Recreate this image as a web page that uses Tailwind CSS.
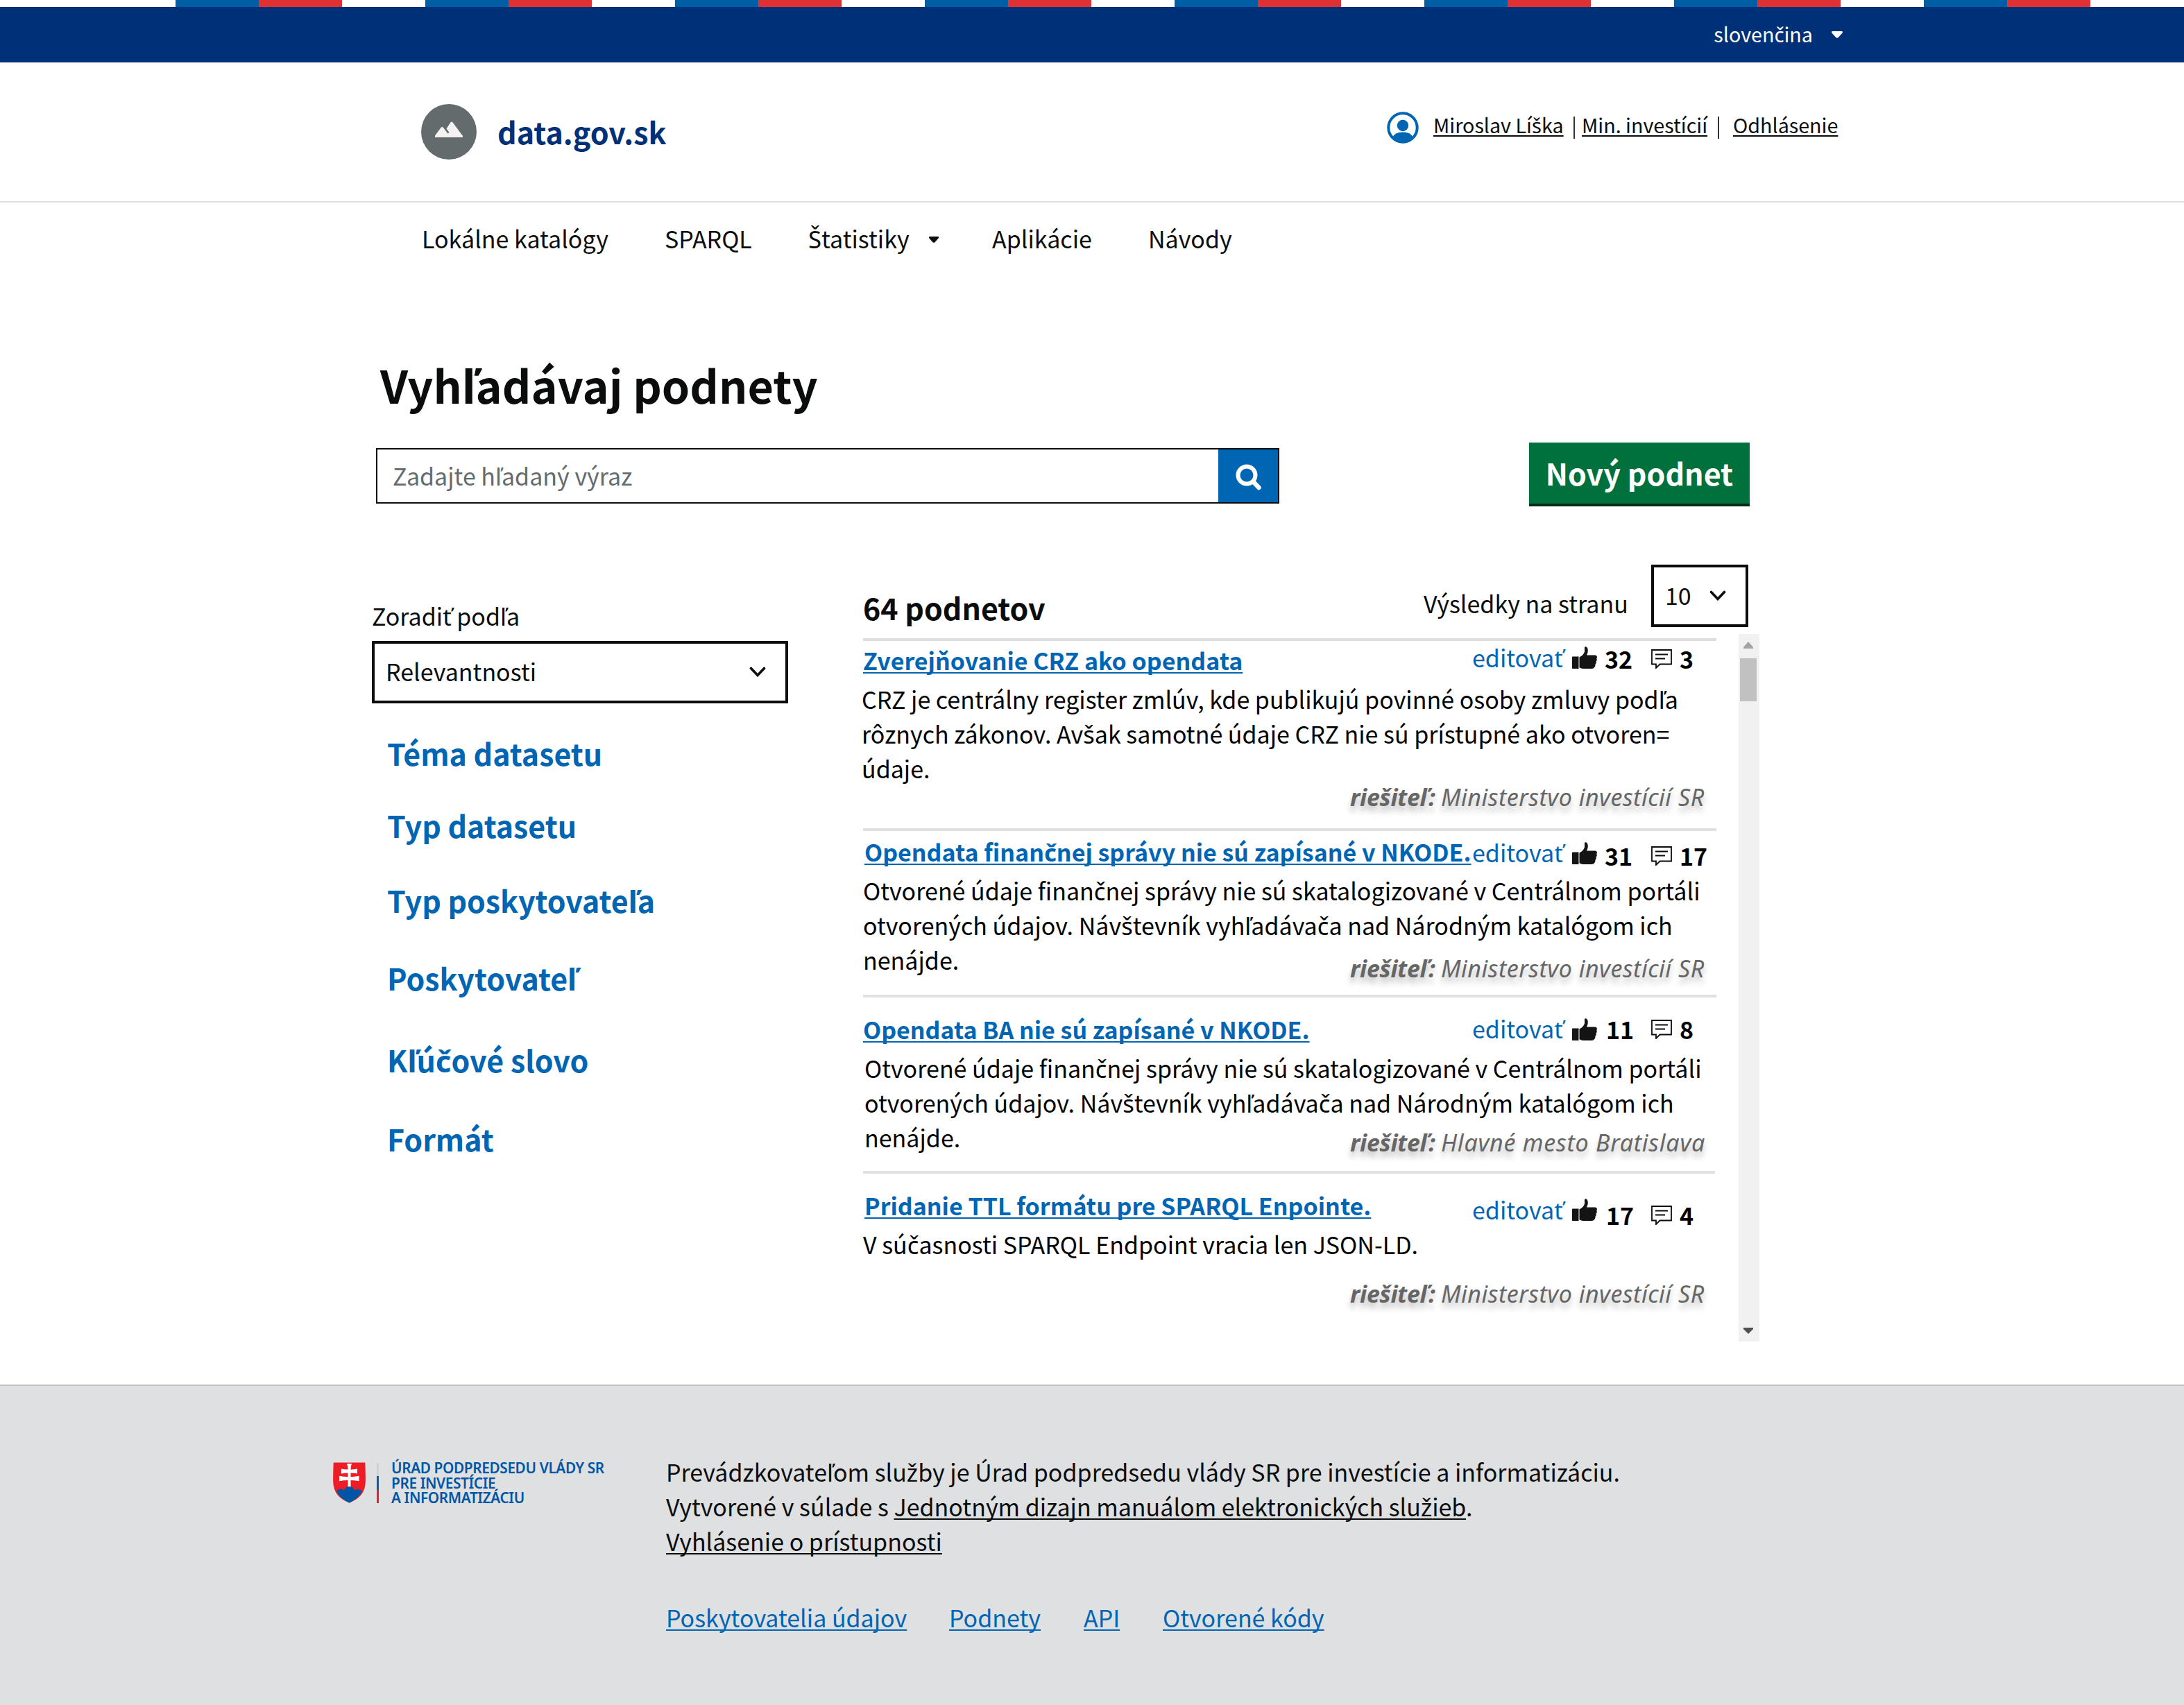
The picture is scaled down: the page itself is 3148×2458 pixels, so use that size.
<!DOCTYPE html>
<html lang="sk">
<head>
<meta charset="utf-8">
<title>data.gov.sk</title>
<script src="https://cdn.jsdelivr.net/npm/@tailwindcss/browser@4"></script>
</head>
<body class="w-[3148px] h-[2458px] overflow-hidden flex flex-col bg-white text-[#0b0c0c] text-[34px] leading-[50px] font-['Noto_Sans_CJK_SC','Noto_Sans',sans-serif] [text-decoration-skip-ink:none]">
<svg class="hidden">
  <symbol id="thumb" viewBox="0 0 36 32"><path d="M0 15.500q0-1 1-1h8.500V32H1q-1 0-1-1z" fill="#141414"/><path d="M10.500 15.500C14 14 17 11 18 7.500V1.500Q18.200 0 20 .3 22.800 1.500 22.800 6q0 3.500-1.800 6.500h12.500Q36 13 36 15q0 1-.8 2 .9 1.500.3 3.300-.3.700-1 1.200.6 1.500-.1 3-.4.800-1 1.200.3 2-.6 3.500-1 2.400-4.500 2.800H16q-3-.3-5.500-1.800z" fill="#141414"/></symbol>
  <symbol id="comment" viewBox="0 0 30 28"><path d="M1 1h28v20.500H12.500L7 27v-5.500H1z" fill="none" stroke="#0b0c0c" stroke-width="1.800"/><path d="M6 7.500h18M6 13.500h14" stroke="#0b0c0c" stroke-width="1.800"/></symbol>
  <symbol id="chevron" viewBox="0 0 24 15"><path d="M2.500 2.500 12 12.500l9.500-10" fill="none" stroke="#0b0c0c" stroke-width="3.600" stroke-linecap="round"/></symbol>
  <symbol id="caret" viewBox="0 0 14 9"><path d="M1 0h12q1 0 1 1v1L8.500 8.200Q7 9.500 5.500 8.200L0 2V1q0-1 1-1z" fill="currentColor"/></symbol>
</svg>

<div class="h-[10px] ml-[253px] w-[2880px] shrink-0 bg-[repeating-linear-gradient(90deg,#005ea5_0px,#005ea5_120px,#df3034_120px,#df3034_240px,#ffffff_240px,#ffffff_360px)]"></div>
<div class="h-20 shrink-0 bg-[#003078] text-white text-[28.700px] leading-[40px] flex items-start justify-end pr-[492px] pt-[19px]">
  <span>slovenčina</span>
  <svg class="w-4 h-[10px] ml-[27px] mt-[16px]"><use href="#caret"/></svg>
</div>

<header class="h-[202px] shrink-0 border-b-2 border-[#e0e0e0] flex items-start pl-[607px]">
  <svg class="w-20 h-20 mt-[60px]" viewBox="0 0 80 80"><circle cx="40" cy="40" r="40" fill="#636b6d"/><path d="M20 48v-2.500L28.500 34q1.500-2 3.500 0l6.500 8.500 2-1.500-4-5.500 5.500-8.500q2-3 4 0L60 46v2z" fill="#f3f2f1"/></svg>
  <a class="ml-[30px] mt-[69px] w-[1282px] text-[43px] leading-[60px] font-bold text-[#003078]">data.gov.sk</a>
  <svg class="w-[46px] h-[46px] mt-[71px]" viewBox="0 0 46 46"><circle cx="23" cy="23" r="20.700" fill="none" stroke="#0065b3" stroke-width="4"/><circle cx="23" cy="20" r="8.200" fill="#0065b3"/><path d="M8 37.500Q11 29.500 23 29.500T38 37.500Q32 44.500 23 44.500T8 37.500z" fill="#0065b3"/></svg>
  <div class="flex text-[28.700px] leading-[40px] mt-[70px] ml-[21px]">
    <a class="w-[187px] whitespace-nowrap underline decoration-2 underline-offset-[3px]">Miroslav Líška</a>
    <i class="w-[2px] h-8 bg-[#333] ml-[15px] mt-[8px]"></i>
    <a class="ml-[10px] w-[180px] whitespace-nowrap underline decoration-2 underline-offset-[3px]">Min. investícií</a>
    <i class="w-[2px] h-8 bg-[#333] ml-[16px] mt-[8px]"></i>
    <a class="ml-[20px] underline decoration-2 underline-offset-[3px]">Odhlásenie</a>
  </div>
</header>

<nav class="flex items-start pl-[608px] pt-[27px] h-[210px] shrink-0">
  <a class="w-[350px]">Lokálne katalógy</a>
  <a class="w-[207px]">SPARQL</a>
  <a class="w-[174px]">Štatistiky</a>
  <svg class="w-[14px] h-[9px] mt-[22px]"><use href="#caret"/></svg>
  <a class="ml-[77px] w-[225px]">Aplikácie</a>
  <a>Návody</a>
</nav>

<h1 class="ml-[548px] mt-[12px] h-20 shrink-0 text-[64.700px] leading-[80px] font-bold">Vyhľadávaj podnety</h1>

<div class="flex items-start ml-[542px] mt-[44px] h-[92px] shrink-0">
  <div class="flex w-[1302px] h-20 mt-2 border-2 border-[#0b0c0c]">
    <div class="grow pl-[22px] pt-[13px] text-[#636b6f]">Zadajte hľadaný výraz</div>
    <div class="w-[86px] bg-[#0065b3] pl-[25px] pt-[21px]">
      <svg class="w-[38px] h-[38px]" viewBox="0 0 38 38"><circle cx="16" cy="16" r="12.500" fill="none" stroke="#fff" stroke-width="6"/><path d="M25.500 25.500l8 8.500" stroke="#fff" stroke-width="6.500" stroke-linecap="round"/></svg>
    </div>
  </div>
  <div class="ml-[360px] w-[318px] h-[92px] bg-[#00703c] border-b-4 border-[#002d18] text-white text-[43px] leading-[60px] font-bold text-center pt-[13px]">Nový podnet</div>
</div>

<main class="flex items-start h-[1266px] shrink-0 pl-[536px]">
  <aside class="w-[600px] pt-[133px]">
    <div>Zoradiť podľa</div>
    <div class="mt-[11px] h-[90px] border-4 border-[#0b0c0c] flex items-start justify-between pl-[16px] pr-[28px] pt-[15px]">
      <span>Relevantnosti</span>
      <svg class="w-6 h-[15px] mt-[18px]"><use href="#chevron"/></svg>
    </div>
    <div class="pl-[22px] text-[42.900px] leading-[60px] font-bold text-[#0065b3]">
      <a class="block mt-[41px]">Téma datasetu</a>
      <a class="block mt-[44px]">Typ datasetu</a>
      <a class="block mt-[48px]">Typ poskytovateľa</a>
      <a class="block mt-[52px]">Poskytovateľ</a>
      <a class="block mt-[58px]">Kľúčové slovo</a>
      <a class="block mt-[54px]">Formát</a>
    </div>
  </aside>

  <section class="ml-[108px] w-[1262px]">
    <div class="w-[1276px] flex items-start h-[190px]">
      <h2 class="mt-[115px] w-[808px] shrink-0 text-[42.900px] leading-[60px] font-bold">64 podnetov</h2>
      <span class="mt-[115px] w-[328px] shrink-0">Výsledky na stranu</span>
      <div class="mt-[84px] w-[140px] h-[90px] border-4 border-[#0b0c0c] flex items-start pl-[16px] pt-[15px] shrink-0">
        <span class="w-[64px]">10</span>
        <svg class="w-6 h-[15px] mt-[18px]"><use href="#chevron"/></svg>
      </div>
    </div>

    <article class="w-[1230px] h-[274px] border-t-4 border-[#dedfe1]">
      <div class="grid grid-cols-[878px_144px_46px_68px_40px_54px] items-start h-[59px]">
        <a class="mt-[3px] whitespace-nowrap font-bold text-[#0065b3]"><span class="underline decoration-2 underline-offset-[3px]">Zverejňovanie CRZ ako opendata</span></a>
        <a class="-mt-[1px] text-[#0065b3]">editovať</a>
        <svg class="w-9 h-8 mt-[8px]"><use href="#thumb"/></svg><b class="ml-px mt-px text-black">32</b>
        <svg class="w-[30px] h-7 mt-[12px]"><use href="#comment"/></svg><b class="ml-px mt-px text-black">3</b>
      </div>
      <p class="-ml-[2px] whitespace-nowrap text-black">CRZ je centrálny register zmlúv, kde publikujú povinné osoby zmluvy podľa<br>rôznych zákonov. Avšak samotné údaje CRZ nie sú prístupné ako otvoren=<br>údaje.</p>
      <div class="-mt-[9px] ml-[702px] flex whitespace-nowrap italic font-['Noto_Sans',sans-serif] text-[34px] text-[#666] [text-shadow:0_8px_8px_rgba(0,0,0,0.25)]"><b class="w-[131px] tracking-[-0.300px]">riešiteľ:</b><span class="tracking-[0.500px]">Ministerstvo investícií SR</span></div>
    </article>

    <article class="w-[1230px] h-[240px] border-t-4 border-[#e0e0e0]">
      <div class="grid grid-cols-[878px_144px_46px_68px_40px_54px] items-start h-[61px]">
        <a class="mt-[5px] ml-[2px] whitespace-nowrap font-bold text-[#0065b3]"><span class="underline decoration-2 underline-offset-[3px]">Opendata finančnej správy nie sú zapísané v NKODE.</span></a>
        <a class="mt-[6px] text-[#0065b3]">editovať</a>
        <svg class="w-9 h-8 mt-[16px]"><use href="#thumb"/></svg><b class="mt-[11px] ml-px text-black">31</b>
        <svg class="w-[30px] h-7 mt-[22px]"><use href="#comment"/></svg><b class="mt-[11px] ml-px text-black">17</b>
      </div>
      <p class="whitespace-nowrap text-black">Otvorené údaje finančnej správy nie sú skatalogizované v Centrálnom portáli<br>otvorených údajov. Návštevník vyhľadávača nad Národným katalógom ich<br>nenájde.</p>
      <div class="-mt-[38px] ml-[702px] flex whitespace-nowrap italic font-['Noto_Sans',sans-serif] text-[34px] text-[#666] [text-shadow:0_8px_8px_rgba(0,0,0,0.25)]"><b class="w-[131px] tracking-[-0.300px]">riešiteľ:</b><span class="tracking-[0.500px]">Ministerstvo investícií SR</span></div>
    </article>

    <article class="w-[1230px] h-[254px] border-t-4 border-[#e0e0e0]">
      <div class="grid grid-cols-[878px_144px_46px_68px_40px_54px] items-start h-[77px]">
        <a class="mt-[21px] whitespace-nowrap font-bold text-[#0065b3]"><span class="underline decoration-2 underline-offset-[3px]">Opendata BA nie sú zapísané v NKODE.</span></a>
        <a class="mt-[20px] text-[#0065b3]">editovať</a>
        <svg class="w-9 h-8 mt-[30px]"><use href="#thumb"/></svg><b class="mt-[21px] ml-[3px] text-black">11</b>
        <svg class="w-[30px] h-7 mt-[32px]"><use href="#comment"/></svg><b class="mt-[21px] ml-px text-black">8</b>
      </div>
      <p class="ml-[2px] whitespace-nowrap text-black">Otvorené údaje finančnej správy nie sú skatalogizované v Centrálnom portáli<br>otvorených údajov. Návštevník vyhľadávača nad Národným katalógom ich<br>nenájde.</p>
      <div class="-mt-[43px] ml-[702px] flex whitespace-nowrap italic font-['Noto_Sans',sans-serif] text-[34px] text-[#666] [text-shadow:0_8px_8px_rgba(0,0,0,0.25)]"><b class="w-[131px] tracking-[-0.300px]">riešiteľ:</b><span class="tracking-[0.750px]">Hlavné mesto Bratislava</span></div>
    </article>

    <article class="w-[1228px] h-[246px] border-t-4 border-[#e0e0e0]">
      <div class="grid grid-cols-[878px_144px_46px_68px_40px_52px] items-start h-[77px]">
        <a class="mt-[21px] ml-[2px] whitespace-nowrap font-bold text-[#0065b3]"><span class="underline decoration-2 underline-offset-[3px]">Pridanie TTL formátu pre SPARQL Enpointe.</span></a>
        <a class="mt-[27px] text-[#0065b3]">editovať</a>
        <svg class="w-9 h-8 mt-[36px]"><use href="#thumb"/></svg><b class="mt-[35px] ml-[3px] text-black">17</b>
        <svg class="w-[30px] h-7 mt-[46px]"><use href="#comment"/></svg><b class="mt-[35px] ml-px text-black">4</b>
      </div>
      <p class="whitespace-nowrap text-black">V súčasnosti SPARQL Endpoint vracia len JSON-LD.</p>
      <div class="mt-[21px] ml-[702px] flex whitespace-nowrap italic font-['Noto_Sans',sans-serif] text-[34px] text-[#666] [text-shadow:0_8px_8px_rgba(0,0,0,0.25)]"><b class="w-[131px] tracking-[-0.300px]">riešiteľ:</b><span class="tracking-[0.500px]">Ministerstvo investícií SR</span></div>
    </article>
  </section>

  <div class="mt-[184px] w-[30px] pr-[2px] h-[1020px] bg-[#f1f1f1] flex flex-col items-center">
    <svg class="w-[14px] h-[10px] mt-[11px]" viewBox="0 0 14 10"><path d="M7 0l7 8v2H0V8z" fill="#a3a3a3"/></svg>
    <div class="mt-[14px] w-6 h-[62px] bg-[#c1c1c1]"></div>
    <svg class="w-[14px] h-[9px] mt-auto mb-[11px]" viewBox="0 0 14 9"><path d="M7 9L0 2V0h14v2z" fill="#505050"/></svg>
  </div>
</main>

<footer class="grow border-t-2 border-[#bfc0c2] bg-[#dee0e2] flex items-start pl-[480px]">
  <svg class="w-[47px] h-[59px] mt-[110px]" viewBox="0 0 47 59"><path d="M.7.500h45.600Q47 20 46.800 28 46.500 50 23.500 58.500.5 50 .2 28 0 20 .7.500z" fill="#ee1c25"/><path d="M5 42q3-4.500 7.500-3.200 1.500.2 3.500 1.500Q18 35 23.500 35t7.500 5.300q5.500-3 8.500-.3 1.700 1 2.500 2.300Q36 53 23.500 58.500 11 53 5 42z" fill="#0055a4"/><path d="M20 2h7q-1.500 4-1.500 8.500 5 0 9.500-1v7q-4.500-1-9.500-1v5.500q6 0 12-1.200v7.400q-6-1.200-12-1.200v9.200q-2-.6-4 0V26q-6 0-12.500 1.200v-7.400Q15.500 21 21.500 21v-5.500q-5 0-9.500 1v-7q4.500 1 9.500 1Q21.500 6 20 2z" fill="#fff"/></svg>
  <div class="ml-[16px] mt-[111px] w-[3px] h-[58px] bg-[linear-gradient(#cfd0d2_0_33.300%,#0b5ba5_33.300%_66.600%,#ee1c25_66.600%)]"></div>
  <div class="ml-[18px] mt-[108px] w-[396px] whitespace-nowrap text-[20.800px] leading-[21.600px] tracking-[-0.380px] font-semibold text-[#0055a4] font-['Noto_Sans',sans-serif]">ÚRAD PODPREDSEDU VLÁDY SR<br>PRE INVESTÍCIE<br>A INFORMATIZÁCIU</div>
  <div class="mt-[99px]">
    <p>Prevádzkovateľom služby je Úrad podpredsedu vlády SR pre investície a informatizáciu.</p>
    <p>Vytvorené v súlade s <a class="underline decoration-2 underline-offset-[3px]">Jednotným dizajn manuálom elektronických služieb</a>.</p>
    <p><a class="underline decoration-2 underline-offset-[3px]">Vyhlásenie o prístupnosti</a></p>
    <div class="flex mt-[60px] text-[#0065b3]">
      <div class="w-[408px]"><a class="underline decoration-2 underline-offset-[3px]">Poskytovatelia údajov</a></div>
      <div class="w-[194px]"><a class="underline decoration-2 underline-offset-[3px]">Podnety</a></div>
      <div class="w-[114px]"><a class="underline decoration-2 underline-offset-[3px]">API</a></div>
      <a class="underline decoration-2 underline-offset-[3px]">Otvorené kódy</a>
    </div>
  </div>
</footer>

<script>
const walker = document.createTreeWalker(document.body, NodeFilter.SHOW_TEXT);
const nodes = [];
while (walker.nextNode()) {
  const n = walker.currentNode;
  if (n.parentElement.tagName !== 'SCRIPT' && !n.parentElement.closest('.italic') && /[čďľťšžŠ]/.test(n.data)) nodes.push(n);
}
for (const n of nodes) {
  const box = document.createDocumentFragment();
  for (const part of n.data.split(/([čďľťšžŠ])/)) {
    if (/^[čďľťšžŠ]$/.test(part)) {
      const s = document.createElement('span');
      s.className = "font-['Noto_Sans'] text-[1.02em] leading-[0]";
      s.textContent = part;
      box.append(s);
    } else if (part) box.append(part);
  }
  // One inline wrapper keeps flex containers from splitting the text.
  const w = document.createElement('span');
  w.append(box);
  n.replaceWith(w);
}
</script>
</body>
</html>
